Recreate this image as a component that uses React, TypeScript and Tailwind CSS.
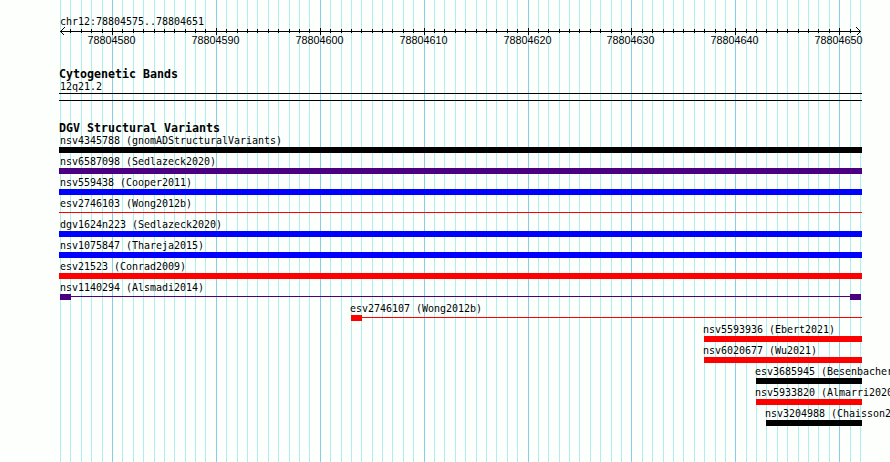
type Variant = {
  name: string
  source: string
  start: number
  color: string
  shape: "bar" | "line"
  caps?: number[]
}

const variants: Variant[] = [
  { name: "nsv4345788", source: "gnomADStructuralVariants", start: 59, color: "#000000", shape: "bar" },
  { name: "nsv6587098", source: "Sedlazeck2020", start: 59, color: "#4b0082", shape: "bar" },
  { name: "nsv559438", source: "Cooper2011", start: 59, color: "#0000ff", shape: "bar" },
  { name: "esv2746103", source: "Wong2012b", start: 59, color: "#ff0000", shape: "line" },
  { name: "dgv1624n223", source: "Sedlazeck2020", start: 59, color: "#0000ff", shape: "bar" },
  { name: "nsv1075847", source: "Thareja2015", start: 59, color: "#0000ff", shape: "bar" },
  { name: "esv21523", source: "Conrad2009", start: 59, color: "#ff0000", shape: "bar" },
  { name: "nsv1140294", source: "Alsmadi2014", start: 60, color: "#4b0082", shape: "line", caps: [60, 850] },
  { name: "esv2746107", source: "Wong2012b", start: 351, color: "#ff0000", shape: "line", caps: [351] },
  { name: "nsv5593936", source: "Ebert2021", start: 704, color: "#ff0000", shape: "bar" },
  { name: "nsv6020677", source: "Wu2021", start: 704, color: "#ff0000", shape: "bar" },
  { name: "esv3685945", source: "Besenbacher2016", start: 756, color: "#000000", shape: "bar" },
  { name: "nsv5933820", source: "Almarri2020", start: 756, color: "#ff0000", shape: "bar" },
  { name: "nsv3204988", source: "Chaisson2019", start: 766, color: "#000000", shape: "bar" },
]

const FIRST_BASE = 78804575
const bases = Array.from({ length: 78 }, (_, i) => ({
  base: FIRST_BASE + i,
  x: Math.round(60 + (i * 800) / 77),
  major: (FIRST_BASE + i) % 10 === 0,
}))

function Grid() {
  return (
    <svg className="absolute inset-0" width="890" height="462" shapeRendering="crispEdges">
      {bases.map(({ base, x, major }) => (
        <rect key={base} x={x} y="0" width="1" height="462" fill={major ? "#87ceeb" : "#afeeee"} />
      ))}
    </svg>
  )
}

function Ruler() {
  return (
    <svg className="block" width="890" height="20" shapeRendering="crispEdges">
      <rect x="60" y="4" width="801" height="1" />
      {bases.slice(1, -1).map(({ base, x, major }) => (
        <rect key={base} x={x} y={major ? 1 : 2} width="1" height={major ? 7 : 4} />
      ))}
      <path d="M64.5 .5 60.5 4.5l4 4M856.5 .5l4 4-4 4" fill="none" stroke="#000" />
      {bases
        .filter((b) => b.major)
        .map(({ base, x }) => (
          <text key={base} x={x - 24.5} y="17" fontFamily="Liberation Sans, sans-serif" fontSize="10.79">
            {base}
          </text>
        ))}
    </svg>
  )
}

function Label({ children }: { children: string }) {
  return (
    <div className="origin-bottom scale-y-110 text-[10px] leading-[10px] tracking-[-0.02px] whitespace-pre">
      {children}
    </div>
  )
}

function Title({ children }: { children: string }) {
  return <h2 className="pl-[59px] text-[11.63px] leading-[12px] font-bold whitespace-pre">{children}</h2>
}

function VariantRow({ variant }: { variant: Variant }) {
  const { name, source, start, color, shape, caps = [] } = variant
  const labelStart = start <= 60 ? 60 : start - 1

  return (
    <div className="h-[21px]">
      <div className="flex h-[15px] items-end pb-px" style={{ paddingLeft: labelStart }}>
        <Label>{`${name} (${source})`}</Label>
      </div>
      <svg className="block" width="890" height="6" shapeRendering="crispEdges">
        <rect x={start} y={shape === "bar" ? 0 : 2} width={(caps.length > 1 ? 861 : 862) - start} height={shape === "bar" ? 6 : 1} fill={color} />
        {caps.map((x) => (
          <rect key={x} x={x} y="0" width="11" height="6" fill={color} />
        ))}
      </svg>
    </div>
  )
}

export default function App() {
  return (
    <div className="relative h-[462px] w-[890px] overflow-hidden bg-[#fdfffd] font-['DejaVu_Sans_Mono',monospace] text-black">
      <Grid />
      <main className="relative">
        <div className="flex h-[27px] items-end pl-[60px]">
          <Label>chr12:78804575..78804651</Label>
        </div>
        <Ruler />

        <section className="pt-[21px]">
          <Title>Cytogenetic Bands</Title>
          <div className="pt-[2px] pl-[59px]">
            <div className="pl-px">
              <Label>12q21.2</Label>
            </div>
            <div className="mt-px h-2 w-[803px] border-y border-black" />
          </div>
        </section>

        <section className="pt-[21px]">
          <Title>DGV Structural Variants</Title>
          <div className="-mt-[2px]">
            {variants.map((variant) => (
              <VariantRow key={variant.name} variant={variant} />
            ))}
          </div>
        </section>
      </main>
    </div>
  )
}
